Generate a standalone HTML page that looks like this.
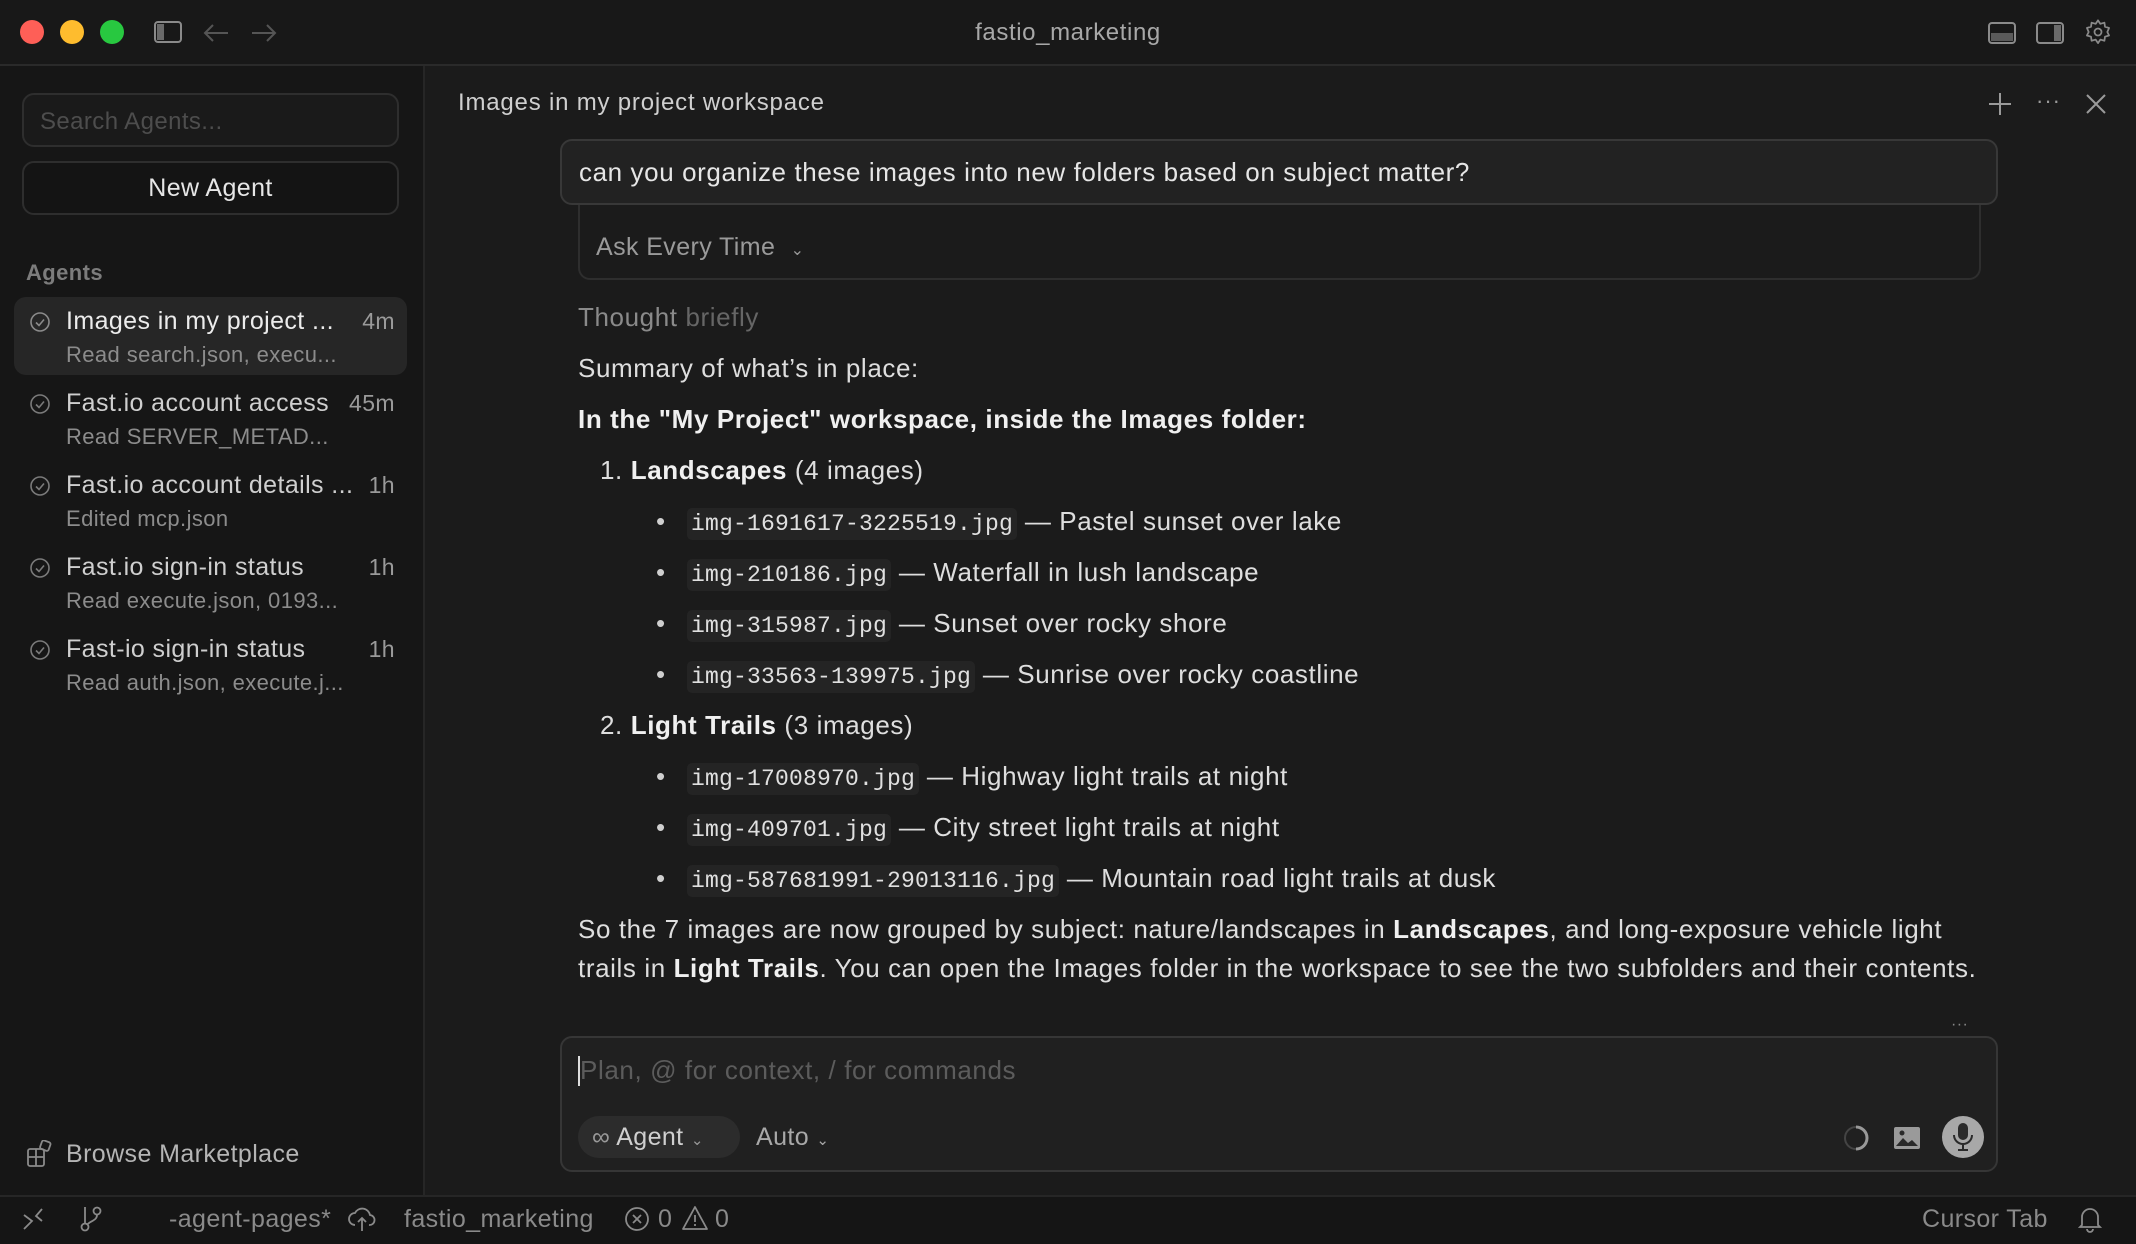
<!DOCTYPE html>
<html><head><meta charset="utf-8"><style>
*{box-sizing:border-box;margin:0;padding:0}
body{width:2136px;height:1244px;background:#1b1b1b;font-family:"Liberation Sans",sans-serif;color:#e4e4e4;position:relative;overflow:hidden;letter-spacing:0.4px}
.abs{position:absolute}
#title{left:0;top:0;width:2136px;height:66px;background:#181818;border-bottom:2px solid #2a2a2a}
#side{left:0;top:66px;width:425px;height:1129px;background:#161616;border-right:2px solid #262626}
#status{left:0;top:1195px;width:2136px;height:49px;background:#151515;border-top:2px solid #262626;color:#8a8a8a;font-size:25px}
.dot{width:24px;height:24px;border-radius:50%;top:20px}
.box{border:2px solid #2e2e2e;border-radius:12px}
.item{left:14px;width:393px;height:78px}
.item .t{position:absolute;left:52px;top:10px;font-size:25px;color:#cfcfcf;white-space:nowrap}
.item .s{position:absolute;left:52px;top:45px;font-size:22px;color:#8c8c8c;white-space:nowrap}
.item .m{position:absolute;right:12px;top:11px;font-size:23px;color:#9a9a9a}
.item svg{position:absolute;left:15px;top:14px}
.ln{position:absolute;left:578px;font-size:26px;color:#dedede;white-space:nowrap;letter-spacing:0.6px}
.ln b{color:#f0f0f0}
code{font-family:"Liberation Mono",monospace;font-size:23px;background:#242424;border-radius:5px;padding:3px 4px;color:#e0e0e0;letter-spacing:0.2px}
.bul{left:656px}
.bul::before{content:"•";position:absolute;left:0;color:#cfcfcf}
.bul span{margin-left:31px}
</style></head><body>
<div id="title" class="abs">
 <div class="abs dot" style="left:20px;background:#fe5f57"></div>
 <div class="abs dot" style="left:60px;background:#febc2e"></div>
 <div class="abs dot" style="left:100px;background:#28c840"></div>
 <svg class="abs" style="left:154px;top:21px" width="28" height="24"><rect x="1" y="1" width="26" height="20" rx="3" fill="none" stroke="#8a8a8a" stroke-width="2"/><rect x="3" y="3" width="7" height="16" fill="#6a6a6a"/></svg>
 <svg class="abs" style="left:202px;top:22px" width="28" height="22"><path d="M26 11H3M11 3L3 11l8 8" fill="none" stroke="#555" stroke-width="2"/></svg>
 <svg class="abs" style="left:250px;top:22px" width="28" height="22"><path d="M2 11h23M17 3l8 8-8 8" fill="none" stroke="#555" stroke-width="2"/></svg>
 <div class="abs" style="left:0;width:2136px;top:19px;text-align:center;font-size:24px;color:#a8a8a8;letter-spacing:0.6px">fastio_marketing</div>
 <svg class="abs" style="left:1988px;top:22px" width="28" height="22"><rect x="1" y="1" width="26" height="20" rx="3" fill="none" stroke="#8a8a8a" stroke-width="2"/><rect x="3" y="11" width="22" height="8" fill="#5a5a5a"/></svg>
 <svg class="abs" style="left:2036px;top:22px" width="28" height="22"><rect x="1" y="1" width="26" height="20" rx="3" fill="none" stroke="#8a8a8a" stroke-width="2"/><rect x="18" y="3" width="7" height="16" fill="#6a6a6a"/></svg>
 <svg class="abs" style="left:2084px;top:18px" width="28" height="28" viewBox="0 0 24 24"><path d="M12 2l2 3 3.5-1 .5 3.5 3.5 1-1.5 3.5 1.5 3-3.5 1-.5 3.5-3.5-1-2 3-2-3-3.5 1-.5-3.5-3.5-1 1.5-3L2.5 8.5 6 7.5 6.5 4 10 5z" fill="none" stroke="#8a8a8a" stroke-width="1.5" stroke-linejoin="round"/><circle cx="12" cy="12" r="3" fill="none" stroke="#8a8a8a" stroke-width="1.5"/></svg>
</div>

<div id="side" class="abs">
 <div class="abs box" style="left:22px;top:27px;width:377px;height:54px;background:#1a1a1a"><div style="position:absolute;left:16px;top:13px;font-size:24px;color:#4d4d4d">Search Agents...</div></div>
 <div class="abs box" style="left:22px;top:95px;width:377px;height:54px;background:#141414;text-align:center;line-height:50px;font-size:25px;color:#e6e6e6">New Agent</div>
 <div class="abs" style="left:26px;top:194px;font-size:22px;color:#7c7c7c;font-weight:bold">Agents</div>
 <div class="abs item" style="top:231px;background:#262626;border-radius:12px"><svg width="22" height="22"><circle cx="11" cy="11" r="9" fill="none" stroke="#8a8a8a" stroke-width="1.6"/><path d="M7 11.5l3 3 5-6" fill="none" stroke="#8a8a8a" stroke-width="1.6"/></svg><div class="t" style="color:#ececec">Images in my project ...</div><div class="s">Read search.json, execu...</div><div class="m">4m</div></div>
 <div class="abs item" style="top:313px"><svg width="22" height="22"><circle cx="11" cy="11" r="9" fill="none" stroke="#7a7a7a" stroke-width="1.6"/><path d="M7 11.5l3 3 5-6" fill="none" stroke="#7a7a7a" stroke-width="1.6"/></svg><div class="t">Fast.io account access</div><div class="s">Read SERVER_METAD...</div><div class="m">45m</div></div>
 <div class="abs item" style="top:395px"><svg width="22" height="22"><circle cx="11" cy="11" r="9" fill="none" stroke="#7a7a7a" stroke-width="1.6"/><path d="M7 11.5l3 3 5-6" fill="none" stroke="#7a7a7a" stroke-width="1.6"/></svg><div class="t">Fast.io account details ...</div><div class="s">Edited mcp.json</div><div class="m">1h</div></div>
 <div class="abs item" style="top:477px"><svg width="22" height="22"><circle cx="11" cy="11" r="9" fill="none" stroke="#7a7a7a" stroke-width="1.6"/><path d="M7 11.5l3 3 5-6" fill="none" stroke="#7a7a7a" stroke-width="1.6"/></svg><div class="t">Fast.io sign-in status</div><div class="s">Read execute.json, 0193...</div><div class="m">1h</div></div>
 <div class="abs item" style="top:559px"><svg width="22" height="22"><circle cx="11" cy="11" r="9" fill="none" stroke="#7a7a7a" stroke-width="1.6"/><path d="M7 11.5l3 3 5-6" fill="none" stroke="#7a7a7a" stroke-width="1.6"/></svg><div class="t">Fast-io sign-in status</div><div class="s">Read auth.json, execute.j...</div><div class="m">1h</div></div>
 <svg class="abs" style="left:27px;top:1074px" width="26" height="28"><rect x="1" y="9" width="16" height="17" rx="2" fill="none" stroke="#8a8a8a" stroke-width="1.8"/><path d="M9 9v17M1 17h16" stroke="#8a8a8a" stroke-width="1.8"/><rect x="14" y="1" width="9" height="9" rx="2" transform="rotate(20 18 5)" fill="none" stroke="#8a8a8a" stroke-width="1.8"/></svg>
 <div class="abs" style="left:66px;top:1074px;font-size:25px;color:#b5b5b5">Browse Marketplace</div>
</div>

<div class="abs" style="left:458px;top:89px;font-size:24px;color:#cfcfcf;letter-spacing:0.8px">Images in my project workspace</div>
<svg class="abs" style="left:1988px;top:92px" width="24" height="24"><path d="M12 1v22M1 12h22" stroke="#9a9a9a" stroke-width="2"/></svg>
<div class="abs" style="left:2036px;top:88px;font-size:22px;color:#9a9a9a;letter-spacing:1px">···</div>
<svg class="abs" style="left:2085px;top:93px" width="22" height="22"><path d="M2 2l18 18M20 2L2 20" stroke="#9a9a9a" stroke-width="2"/></svg>

<div class="abs box" style="left:578px;top:200px;width:1403px;height:80px;border-top:none;border-radius:0 0 12px 12px"></div>
<div class="abs" style="left:596px;top:233px;font-size:25px;color:#9a9a9a">Ask Every Time <span style="font-size:16px;margin-left:8px">&#8964;</span></div>
<div class="abs box" style="left:560px;top:139px;width:1438px;height:66px;background:#222;border-color:#383838"><div style="position:absolute;left:17px;top:16px;font-size:26px;color:#e6e6e6;letter-spacing:0.6px">can you organize these images into new folders based on subject matter?</div></div>

<div class="ln" style="top:302px;color:#8a8a8a">Thought <span style="color:#666">briefly</span></div>
<div class="ln" style="top:353px">Summary of what’s in place:</div>
<div class="ln" style="top:404px"><b>In the "My Project" workspace, inside the Images folder:</b></div>
<div class="ln" style="top:455px;left:600px">1. <b>Landscapes</b> (4 images)</div>
<div class="ln bul" style="top:506px"><span><code>img-1691617-3225519.jpg</code> — Pastel sunset over lake</span></div>
<div class="ln bul" style="top:557px"><span><code>img-210186.jpg</code> — Waterfall in lush landscape</span></div>
<div class="ln bul" style="top:608px"><span><code>img-315987.jpg</code> — Sunset over rocky shore</span></div>
<div class="ln bul" style="top:659px"><span><code>img-33563-139975.jpg</code> — Sunrise over rocky coastline</span></div>
<div class="ln" style="top:710px;left:600px">2. <b>Light Trails</b> (3 images)</div>
<div class="ln bul" style="top:761px"><span><code>img-17008970.jpg</code> — Highway light trails at night</span></div>
<div class="ln bul" style="top:812px"><span><code>img-409701.jpg</code> — City street light trails at night</span></div>
<div class="ln bul" style="top:863px"><span><code>img-587681991-29013116.jpg</code> — Mountain road light trails at dusk</span></div>
<div class="ln" style="top:914px">So the 7 images are now grouped by subject: nature/landscapes in <b>Landscapes</b>, and long-exposure vehicle light</div>
<div class="ln" style="top:953px">trails in <b>Light Trails</b>. You can open the Images folder in the workspace to see the two subfolders and their contents.</div>

<div class="abs" style="left:1951px;top:1016px;font-size:16px;color:#888">···</div>
<div class="abs box" style="left:560px;top:1036px;width:1438px;height:136px;background:#202020;border-color:#363636">
 <div style="position:absolute;left:16px;top:18px;width:2px;height:30px;background:#ddd"></div>
 <div style="position:absolute;left:18px;top:17px;font-size:26px;color:#5c5c5c;letter-spacing:0.6px">Plan, @ for context, / for commands</div>
 <div style="position:absolute;left:16px;top:78px;width:162px;height:42px;border-radius:21px;background:#2c2c2c;font-size:25px;color:#cfcfcf;line-height:42px;padding-left:14px"><span style="color:#999">∞</span> Agent <span style="font-size:15px;color:#999">&#8964;</span></div>
 <div style="position:absolute;left:194px;top:78px;font-size:25px;color:#a8a8a8;line-height:42px">Auto <span style="font-size:15px">&#8964;</span></div>
 <svg style="position:absolute;left:1282px;top:86px" width="28" height="28"><path d="M12 3a11 11 0 0 1 0 22" fill="none" stroke="#999" stroke-width="3"/><path d="M12 25a11 11 0 0 1 0-22" fill="none" stroke="#444" stroke-width="2"/></svg>
 <svg style="position:absolute;left:1331px;top:88px" width="28" height="24"><rect x="1" y="1" width="26" height="22" rx="2" fill="#9a9a9a"/><path d="M3 20l7-8 5 5 4-3 6 6z" fill="#2a2a2a"/><circle cx="9" cy="7" r="2.5" fill="#2a2a2a"/></svg>
 <div style="position:absolute;left:1380px;top:78px;width:42px;height:42px;border-radius:50%;background:#a8a8a8"></div>
 <svg style="position:absolute;left:1388px;top:84px" width="26" height="30"><rect x="8" y="1" width="10" height="17" rx="5" fill="#2a2a2a"/><path d="M4 13a9 9 0 0 0 18 0M13 22v6M8 28h10" fill="none" stroke="#2a2a2a" stroke-width="2"/></svg>
</div>

<div id="status" class="abs">
 <svg class="abs" style="left:22px;top:10px" width="22" height="26"><path d="M2 22l8-8-8-6M20 2l-6 7 6 5" fill="none" stroke="#8a8a8a" stroke-width="1.8"/></svg>
 <svg class="abs" style="left:80px;top:8px" width="22" height="28"><circle cx="5" cy="22" r="3.5" fill="none" stroke="#8a8a8a" stroke-width="1.8"/><circle cx="17" cy="6" r="3.5" fill="none" stroke="#8a8a8a" stroke-width="1.8"/><path d="M5 2v17M17 10c0 6-8 6-10 10" fill="none" stroke="#8a8a8a" stroke-width="1.8"/></svg>
 <div class="abs" style="left:169px;top:8px">-agent-pages*</div>
 <svg class="abs" style="left:348px;top:8px" width="28" height="28"><path d="M7 20a6 6 0 0 1 0-12 8 8 0 0 1 15 2 5 5 0 0 1-1 10M14 26V13M10 17l4-4 4 4" fill="none" stroke="#8a8a8a" stroke-width="1.8"/></svg>
 <div class="abs" style="left:404px;top:8px">fastio_marketing</div>
 <svg class="abs" style="left:624px;top:9px" width="26" height="26"><circle cx="13" cy="13" r="11" fill="none" stroke="#8a8a8a" stroke-width="1.8"/><path d="M9 9l8 8M17 9l-8 8" stroke="#8a8a8a" stroke-width="1.8"/></svg>
 <div class="abs" style="left:658px;top:8px">0</div>
 <svg class="abs" style="left:681px;top:8px" width="28" height="26"><path d="M14 2L26 24H2z" fill="none" stroke="#8a8a8a" stroke-width="1.8" stroke-linejoin="round"/><path d="M14 10v7M14 19v2" stroke="#8a8a8a" stroke-width="1.8"/></svg>
 <div class="abs" style="left:715px;top:8px">0</div>
 <div class="abs" style="left:1922px;top:8px">Cursor Tab</div>
 <svg class="abs" style="left:2078px;top:8px" width="24" height="28"><path d="M4 20V12a8 8 0 0 1 16 0v8l2 2H2zM9 24a3 3 0 0 0 6 0" fill="none" stroke="#8a8a8a" stroke-width="1.8"/></svg>
</div>
</body></html>
